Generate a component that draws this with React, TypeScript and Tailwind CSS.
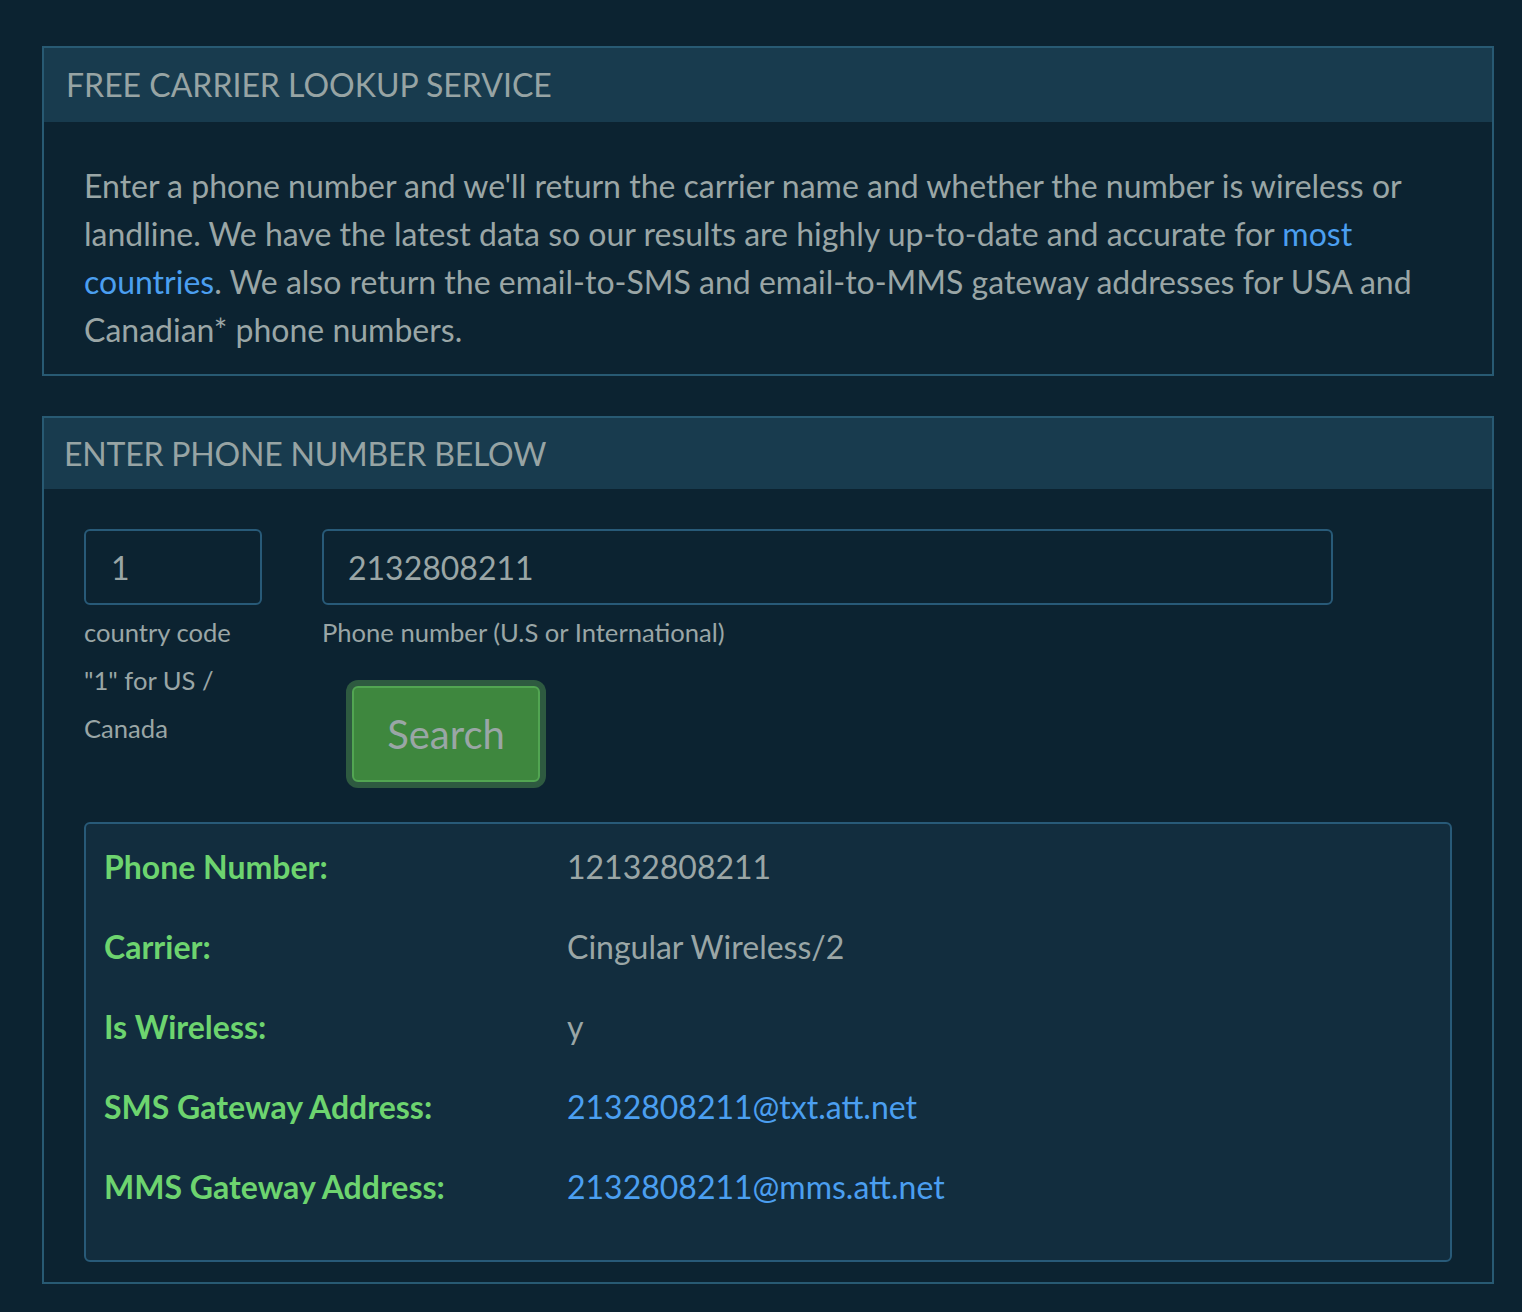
import React, { useState } from 'react';

const font = { fontFamily: 'Lato, "Open Sans", sans-serif' };

const ResultRow: React.FC<{ label: string; value: string; link?: boolean }> = ({ label, value, link }) => (
    <div className="flex h-[80px] items-center">
        <div className="w-[463px] text-[32px] font-bold text-[#6dd46f]">{label}</div>
        {link ? (
            <a href="#" className="text-[32px] text-[#4b9ff0]">{value}</a>
        ) : (
            <div className="text-[32px] text-[#9aa6a6]">{value}</div>
        )}
    </div>
);

const App: React.FC = () => {
    const [code, setCode] = useState('1');
    const [phone, setPhone] = useState('2132808211');

    return (
        <div className="min-h-[1312px] bg-[#0c2331] pl-[42px] pr-[28px] pt-[46px] pb-[30px] text-[#9aa6a6]" style={font}>
            {/* Intro panel */}
            <div className="border-2 border-[#285a73]">
                <div className="flex h-[74px] items-center bg-[#183b4e] px-[22px]">
                    <h2 className="text-[32px] uppercase text-[#97a4a4]">Free Carrier Lookup Service</h2>
                </div>
                <div className="px-[40px] pt-[40px] pb-[20px]">
                    <p className="text-[32px] leading-[48px]">
                        Enter a phone number and we'll return the carrier name and whether the number is wireless or
                        landline. We have the latest data so our results are highly up-to-date and accurate for{' '}
                        <a href="#" className="text-[#4b9ff0]">most countries</a>. We also return the email-to-SMS and
                        email-to-MMS gateway addresses for USA and Canadian* phone numbers.
                    </p>
                </div>
            </div>

            {/* Lookup panel */}
            <div className="mt-[40px] border-2 border-[#285a73]">
                <div className="flex h-[71px] items-center bg-[#183b4e] px-[20px]">
                    <h2 className="text-[32px] uppercase tracking-[-0.2px] text-[#97a4a4]">Enter Phone Number Below</h2>
                </div>
                <div className="px-[40px] pt-[40px] pb-[20px]">
                    <div className="flex">
                        <div className="w-[178px]">
                            <input
                                value={code}
                                onChange={(e) => setCode(e.target.value)}
                                className="h-[76px] w-full rounded-[6px] border-2 border-[#285a78] bg-transparent px-[25px] text-[32px] text-[#9aa6a6] outline-none"
                            />
                            <div className="mt-[3px] text-[25.6px] leading-[48px]">
                                country code<br />"1" for US /<br />Canada
                            </div>
                        </div>
                        <div className="ml-[60px] w-[1011px]">
                            <input
                                value={phone}
                                onChange={(e) => setPhone(e.target.value)}
                                className="h-[76px] w-full rounded-[6px] border-2 border-[#285a78] bg-transparent px-[24px] text-[32px] text-[#9aa6a6] outline-none"
                            />
                            <div className="mt-[3px] text-[25.6px] leading-[48px]">Phone number (U.S or International)</div>
                            <button className="mt-[30px] ml-[30px] h-[96px] w-[188px] rounded-[6px] border-2 border-[#52a552] bg-[#3e873e] text-[40px] text-[#9aa6a6] shadow-[0_0_0_6px_#2e5a40]">
                                Search
                            </button>
                        </div>
                    </div>

                    <div className="mt-[40px] rounded-[6px] border-2 border-[#285a78] bg-[#122d3e] px-[18px] pt-[3px] pb-[33px]">
                        <ResultRow label="Phone Number:" value="12132808211" />
                        <ResultRow label="Carrier:" value="Cingular Wireless/2" />
                        <ResultRow label="Is Wireless:" value="y" />
                        <ResultRow label="SMS Gateway Address:" value="2132808211@txt.att.net" link />
                        <ResultRow label="MMS Gateway Address:" value="2132808211@mms.att.net" link />
                    </div>
                </div>
            </div>
        </div>
    );
};

export default App;
